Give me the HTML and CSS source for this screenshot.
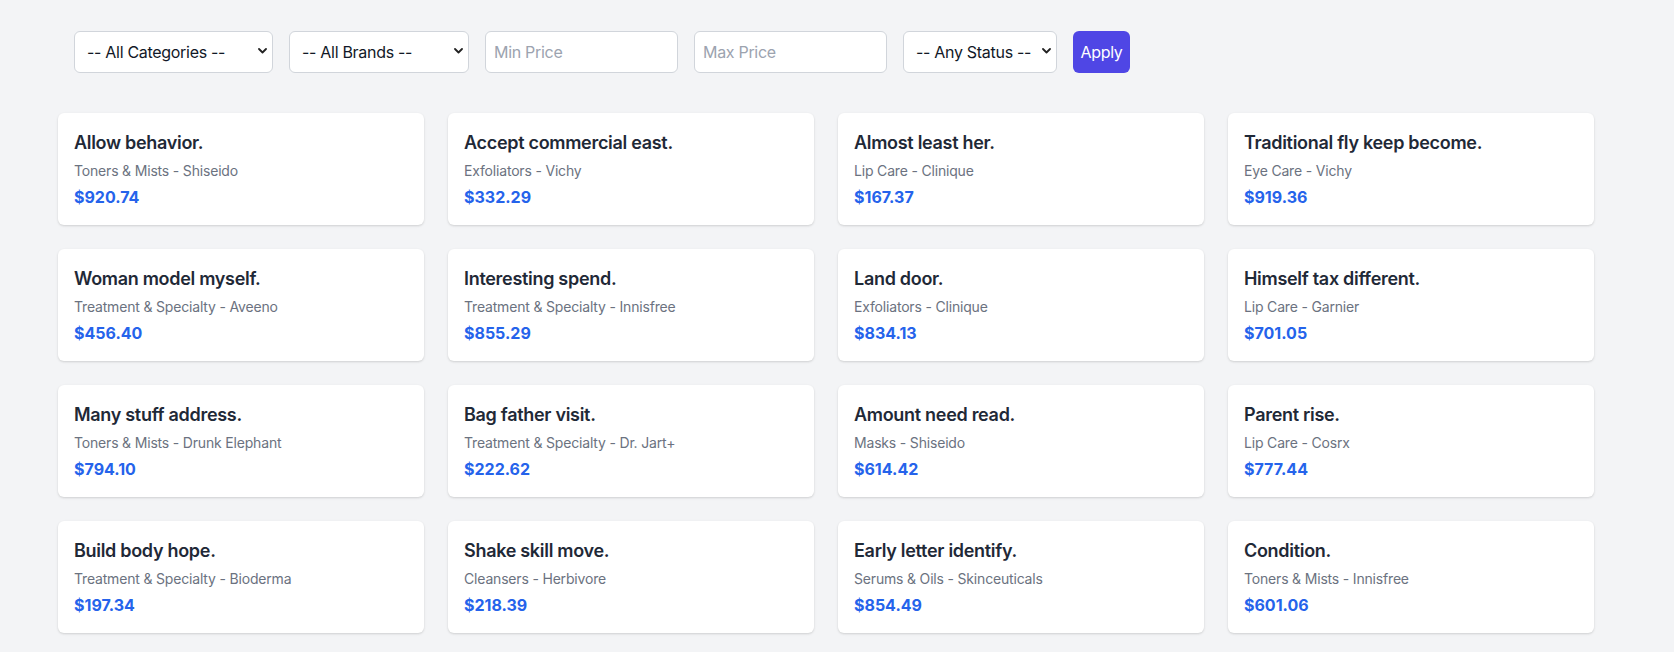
FILE: index.html
```html
<!DOCTYPE html>
<html lang="en">
<head>
<meta charset="utf-8">
<title>Products</title>
<link rel="stylesheet" href="styles.css">
</head>
<body>
<main class="page">
  <form class="filters">
    <div class="select-wrap w-cat">
      <select class="field select"><option>-- All Categories --</option></select>
    </div>
    <div class="select-wrap w-brand">
      <select class="field select"><option>-- All Brands --</option></select>
    </div>
    <input class="field input" type="text" placeholder="Min Price">
    <input class="field input" type="text" placeholder="Max Price">
    <div class="select-wrap w-status">
      <select class="field select"><option>-- Any Status --</option></select>
    </div>
    <button class="apply" type="button">Apply</button>
  </form>

  <section class="grid">
    <article class="card"><h3 class="title">Allow behavior.</h3><p class="meta">Toners &amp; Mists - Shiseido</p><p class="price">$920.74</p></article>
    <article class="card"><h3 class="title">Accept commercial east.</h3><p class="meta">Exfoliators - Vichy</p><p class="price">$332.29</p></article>
    <article class="card"><h3 class="title">Almost least her.</h3><p class="meta">Lip Care - Clinique</p><p class="price">$167.37</p></article>
    <article class="card"><h3 class="title">Traditional fly keep become.</h3><p class="meta">Eye Care - Vichy</p><p class="price">$919.36</p></article>

    <article class="card"><h3 class="title">Woman model myself.</h3><p class="meta">Treatment &amp; Specialty - Aveeno</p><p class="price">$456.40</p></article>
    <article class="card"><h3 class="title">Interesting spend.</h3><p class="meta">Treatment &amp; Specialty - Innisfree</p><p class="price">$855.29</p></article>
    <article class="card"><h3 class="title">Land door.</h3><p class="meta">Exfoliators - Clinique</p><p class="price">$834.13</p></article>
    <article class="card"><h3 class="title">Himself tax different.</h3><p class="meta">Lip Care - Garnier</p><p class="price">$701.05</p></article>

    <article class="card"><h3 class="title">Many stuff address.</h3><p class="meta">Toners &amp; Mists - Drunk Elephant</p><p class="price">$794.10</p></article>
    <article class="card"><h3 class="title">Bag father visit.</h3><p class="meta">Treatment &amp; Specialty - Dr. Jart+</p><p class="price">$222.62</p></article>
    <article class="card"><h3 class="title">Amount need read.</h3><p class="meta">Masks - Shiseido</p><p class="price">$614.42</p></article>
    <article class="card"><h3 class="title">Parent rise.</h3><p class="meta">Lip Care - Cosrx</p><p class="price">$777.44</p></article>

    <article class="card"><h3 class="title">Build body hope.</h3><p class="meta">Treatment &amp; Specialty - Bioderma</p><p class="price">$197.34</p></article>
    <article class="card"><h3 class="title">Shake skill move.</h3><p class="meta">Cleansers - Herbivore</p><p class="price">$218.39</p></article>
    <article class="card"><h3 class="title">Early letter identify.</h3><p class="meta">Serums &amp; Oils - Skinceuticals</p><p class="price">$854.49</p></article>
    <article class="card"><h3 class="title">Condition.</h3><p class="meta">Toners &amp; Mists - Innisfree</p><p class="price">$601.06</p></article>
  </section>
</main>
</body>
</html>
```

FILE: styles.css
```css
* { box-sizing: border-box; }

html, body {
  margin: 0;
  background: #f3f4f6;
  font-family: Inter, "Noto Sans", "Liberation Sans", sans-serif;
  color: #1f2937;
}

.page {
  padding: 15px 0 40px 58px;
  width: 1594px;
}

.filters {
  display: flex;
  align-items: center;
  gap: 16px;
  padding: 16px;
  margin: 0 0 24px;
}

.field {
  height: 42px;
  border: 1px solid #d1d5db;
  border-radius: 6px;
  background: #ffffff;
  font-family: inherit;
  font-size: 16px;
  line-height: 24px;
  letter-spacing: -0.3px;
  color: #111827;
  outline: none;
}

.input {
  width: 193px;
  padding: 8px;
}

.input::placeholder { color: #9ca3af; }

.select-wrap { position: relative; }
.select-wrap::after {
  content: "";
  position: absolute;
  right: 6px;
  top: 17px;
  width: 9px;
  height: 6px;
  background: url("data:image/svg+xml;utf8,<svg xmlns='http://www.w3.org/2000/svg' width='9' height='6' viewBox='0 0 9 6'><path d='M1 1l3.5 3.5L8 1' fill='none' stroke='%23222' stroke-width='1.8' stroke-linecap='round' stroke-linejoin='round'/></svg>") no-repeat center;
  pointer-events: none;
}

.select {
  -webkit-appearance: none;
  appearance: none;
  width: 100%;
  padding: 8px 18px 8px 12px;
}

.w-cat { width: 199px; }
.w-brand { width: 180px; }
.w-status { width: 154px; }

.apply {
  width: 57px;
  height: 42px;
  padding: 8px 0;
  border: 0;
  border-radius: 6px;
  background: #4f46e5;
  color: #ffffff;
  font-family: inherit;
  font-size: 16px;
  line-height: 24px;
  letter-spacing: -0.3px;
  text-align: center;
}

.grid {
  display: grid;
  grid-template-columns: repeat(4, 366px);
  gap: 24px;
}

.card {
  background: #ffffff;
  border-radius: 6px;
  padding: 16px;
  height: 112px;
  box-shadow: 0 1px 3px rgba(0, 0, 0, 0.1), 0 1px 2px rgba(0, 0, 0, 0.06);
}

.title {
  margin: 0;
  font-size: 18px;
  line-height: 28px;
  font-weight: 600;
  letter-spacing: -0.3px;
  color: #1f2937;
}

.meta {
  margin: 4px 0 0;
  font-size: 14px;
  line-height: 20px;
  letter-spacing: -0.18px;
  color: #6b7280;
}

.price {
  margin: 4px 0 0;
  font-size: 16px;
  line-height: 24px;
  font-weight: 700;
  color: #2563eb;
}
```
